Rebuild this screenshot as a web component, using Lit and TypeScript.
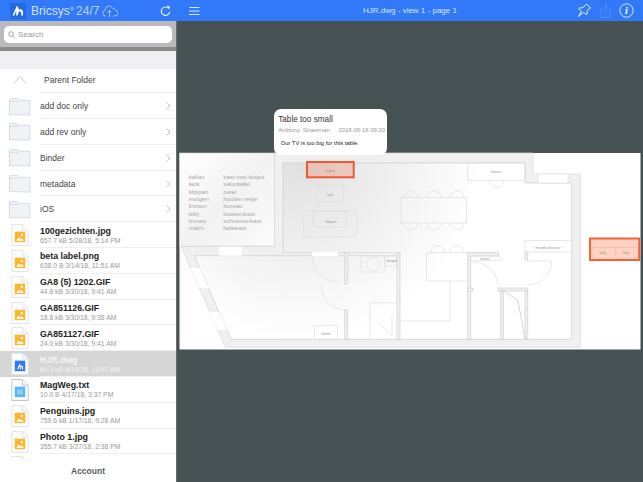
import { LitElement, html, svg, css } from 'lit'
import { customElement, state } from 'lit/decorators.js'

type Entry = { name: string; meta?: string; kind: 'folder' | 'image' | 'dwg' | 'txt'; selected?: boolean }

const ENTRIES: Entry[] = [
  { name: 'add doc only', kind: 'folder' },
  { name: 'add rev only', kind: 'folder' },
  { name: 'Binder', kind: 'folder' },
  { name: 'metadata', kind: 'folder' },
  { name: 'iOS', kind: 'folder' },
  { name: '100gezichten.jpg', meta: '657.7 kB 5/28/18, 5:14 PM', kind: 'image' },
  { name: 'beta label.png', meta: '638.0 B 3/14/18, 11:51 AM', kind: 'image' },
  { name: 'GA8 (5) 1202.GIF', meta: '44.8 kB 3/30/18, 9:41 AM', kind: 'image' },
  { name: 'GA851126.GIF', meta: '18.8 kB 3/30/18, 9:38 AM', kind: 'image' },
  { name: 'GA851127.GIF', meta: '24.0 kB 3/30/18, 9:41 AM', kind: 'image' },
  { name: 'HJR.dwg', meta: '64.3 kB 6/18/18, 11:07 AM', kind: 'dwg', selected: true },
  { name: 'MagWeg.txt', meta: '10.0 B 4/17/18, 3:37 PM', kind: 'txt' },
  { name: 'Penguins.jpg', meta: '759.6 kB 1/17/18, 9:28 AM', kind: 'image' },
  { name: 'Photo 1.jpg', meta: '355.7 kB 3/27/18, 2:38 PM', kind: 'image' },
]

const LEGEND_A = ['kallax', 'lack', 'klippan', 'molgen', 'linmon', 'billy', 'trones', 'malm']
const LEGEND_B = ['kast met kotjes', 'salontafel', 'zetel', 'houten rekje', 'bureau', 'boekenkast', 'schoenenkast', 'ladekast']

const folderIcon = html`<svg class="icon" width="23" height="19" viewBox="0 0 24 20">
  <path d="M1.5 18.5V2.500q0-1 1-1h7q1 0 2 1.500l.5.5h10q1 0 1 1v14.500z" fill="#f1f2f6" stroke="#d3d9e5" />
  <path d="M1.500 4.500h10" stroke="#d3d9e5" fill="none" />
</svg>`

function docIcon(kind: Entry['kind']) {
  const stroke = kind === 'txt' ? '#bcc3d0' : '#dde3ee'
  let inner = svg``
  if (kind === 'image') {
    inner = svg`<rect x="3.500" y="8" width="11" height="11" fill="#fcb731" />
      <path d="M5 17.500l2.500-3.500 2 2 1.500-1 2 2.500z" fill="#fff" />
      <circle cx="11" cy="11.500" r="1.200" fill="#fff" />`
  } else if (kind === 'dwg') {
    inner = svg`<rect x="3.500" y="8" width="11" height="11" fill="#2f78f6" />
      <path d="M6 17l2.600-6 1.200 2.400q2-.6 2.400 1.200V17h-1.300v-2q-.4-.8-1.400-.2L10.200 17H9l-.4-3.200L7.300 17z" fill="#fff" />`
  } else if (kind === 'txt') {
    inner = svg`<rect x="3.500" y="8" width="11" height="11" fill="#5cb8ee" />
      <rect x="6" y="11" width="6" height="5" fill="#8ed0f5" />`
  }
  return html`<svg class="icon" width="18" height="22" viewBox="0 0 18 23">
    <path d="M.5.500h11l6 6v16H.5z" fill="#fff" stroke=${stroke} />
    <path d="M11.500.500v6h6" fill="#f6f8fb" stroke=${stroke} />
    ${inner}
  </svg>`
}

// floor plan, in page coordinates (the viewBox starts at the top left of the page)
function plan() {
  const text = (x: number, y: number, t: string) =>
    svg`<text x=${x} y=${y} text-anchor="middle" class="lbl">${t}</text>`
  const chair = (x: number, y: number, up: boolean) =>
    svg`<path d="M${x - 7} ${y}a7 7 0 0 ${up ? 1 : 0} 14 0" class="thin" />`
  return svg`
    <defs>
      <radialGradient id="shade" gradientUnits="userSpaceOnUse" cx="300" cy="160" r="180">
        <stop offset="0" stop-color="#e0e0e0" />
        <stop offset="1" stop-color="#ffffff" />
      </radialGradient>
      <linearGradient id="legend" x1="0" y1="0" x2="1" y2="1">
        <stop offset="0" stop-color="#ffffff" />
        <stop offset=".5" stop-color="#f2f2f2" />
        <stop offset="1" stop-color="#fbfbfb" />
      </linearGradient>
    </defs>
    <rect x="179.500" y="153" width="461" height="196.500" fill="#fff" />
    <path d="M181 246.500H274V153H533v21h47.300v173.300H225.300zM283 163v89.500h117v3H194.300L231 339.300H571.700V183H525V163z" fill="#f0f0f0" fill-rule="evenodd" stroke="#dadada" stroke-width=".7" />
    <path d="M283 163H525V183H571.700V339.300H231L194.300 255.700H283z" fill="url(#shade)" />
    <path d="M283 163H525V183H571.700V339.300H231L194.300 255.700H400V252.700H283z" fill="none" stroke="#d6d6d6" stroke-width=".8" />
    <path d="M219 246.500h23v9.200h-23z" fill="#fff" />
    <path d="M190.400 268L199.700 268 208.500 288 199.200 288zM209.700 312L219 312 226.900 330 217.700 330z" fill="#fff" />
    <path d="M538 174h30v9h-30z" fill="#fff" stroke="#dcdcdc" stroke-width=".6" />
    <path d="M312 252h26v4.200h-26z" fill="#fff" />

    <g class="thin">
      <path d="M312 256a26 26 0 0 0 26 26" />
      <path d="M321 285a25 25 0 0 0 25 25" />
      <rect x="361" y="256" width="24" height="16" />
      <circle cx="373" cy="264" r="7" />
      <rect x="385" y="256" width="12" height="10" />
      <path d="M370 339V303H397M400 321h50V281h17.500M377 322l15 13M392 316v21" />
      <path d="M426.500 281V252.700H467.500M426.500 281H450" />
      <rect x="401" y="197.700" width="65.700" height="25.300" />
      <rect x="467.700" y="163" width="57.300" height="17.700" />
      <rect x="303.700" y="211" width="53.300" height="26" />
      <rect x="313" y="211" width="33.700" height="16" />
      <rect x="317" y="185" width="26.700" height="16.700" />
      <rect x="314.300" y="325.700" width="23.400" height="13.600" />
      <rect x="525" y="240.700" width="46.700" height="11.300" />
      <rect x="470.700" y="256" width="29.300" height="4.700" />
      <path d="M473 262a25 26 0 0 1 25 26" />
      <path d="M527.700 285a24 24 0 0 0 24-24H527.700" />
    </g>
    ${chair(410.7, 197.7, true)}${chair(434, 197.7, true)}${chair(457, 197.7, true)}
    ${chair(410.7, 223, false)}${chair(434, 223, false)}${chair(457, 223, false)}
    ${chair(437.7, 252.7, true)}${chair(456.7, 252.7, true)}
    ${chair(496.7, 180.7, false)}

    <g class="wall">
      <path d="M344.700 252.700v31h3v-31zM344.700 310v29.300h3V310z" />
      <path d="M397 252.700h3v86.600h-3z" />
      <path d="M467.700 339.300V252.700H498.500V256H470.700V339.300z" />
      <path d="M467.700 288h5v3h-5zM498 288h29.700v3H498z" />
      <path d="M500.700 291h2.700v48.300h-2.700zM525 291h2.700v48.300H525z" />
      <path d="M525 252h2.700v8H525z" />
    </g>
    <path d="M503.500 290.500L518 300.700 525 339" fill="none" stroke="#c4c4c4" stroke-width=".7" />

    <rect x="179.700" y="153" width="94.600" height="93" fill="url(#legend)" stroke="#d2d2d2" stroke-width=".6" />
    ${LEGEND_A.map((t, i) => svg`<text x="188.700" y=${179 + i * 7.33} class="legend">${t}</text>`)}
    ${LEGEND_B.map((t, i) => svg`<text x="223.300" y=${179 + i * 7.33} class="legend">${t}</text>`)}

    ${text(330.3, 172.400, 'kallax')}${text(330.3, 196, 'lack')}${text(331, 223, 'klippan')}
    ${text(326, 335, 'malm')}${text(392, 261.500, 'droger')}${text(496, 172.500, 'linmon')}
    ${text(548, 248.800, 'meuble dressoir')}${text(485, 259.800, 'trones')}

    <rect x="307" y="162" width="46.700" height="15.300" fill="#f0562a" fill-opacity=".22" stroke="#ee5a30" stroke-width="2" />
    <rect x="590" y="238.500" width="49.200" height="21.500" fill="#ff6a3c" fill-opacity=".3" stroke="#f4643a" stroke-width="2" />
    <path d="M592 247.700H638M615.700 247.700V258M592 247.700V258" fill="none" stroke="#e0b0a0" stroke-width=".6" />
    ${text(602.700, 254, 'billy')}${text(626, 254, 'billy')}
  `
}

@customElement('app-root')
class App extends LitElement {
  static styles = css`
    :host {
      display: flex;
      width: 643px;
      height: 482px;
      overflow: hidden;
      font-family: 'Liberation Sans', Arial, sans-serif;
      color: #333;
    }
    .side {
      width: 177px;
      flex: none;
      display: flex;
      flex-direction: column;
      background: #fff;
      box-shadow: inset -1px 0 0 #6b7173;
    }
    .side-head {
      height: 21px;
      flex: none;
      background: #3179f8;
      display: flex;
      align-items: center;
      padding: 0 6px 0 10px;
      color: #d3e2ff;
    }
    .logo {
      width: 16px;
      height: 16px;
      background: #2469dd;
      display: flex;
      align-items: center;
      justify-content: center;
      margin-right: 5px;
      border-radius: 1px;
    }
    .brand {
      font-size: 12px;
      white-space: nowrap;
    }
    .brand sup {
      font-size: 6px;
      line-height: 0;
      vertical-align: 4px;
      margin-right: 2px;
    }
    .brand .thin {
      opacity: 0.85;
    }
    .cloud {
      margin-left: 3px;
    }
    .refresh {
      margin-left: auto;
    }
    .search-band {
      height: 25.500px;
      flex: none;
      background: #b9b9be;
      padding: 5px 4px 4px 4px;
      box-sizing: border-box;
      margin-right: 1px;
    }
    .search {
      height: 16.500px;
      background: #fff;
      border-radius: 5px;
      display: flex;
      align-items: center;
      gap: 3px;
      padding-left: 4px;
      font-size: 8px;
      color: #98989d;
    }
    .dark-band {
      height: 4.500px;
      flex: none;
      background: #8a8a8a;
      margin-right: 1px;
    }
    .light-band {
      height: 16.500px;
      flex: none;
      background: #efeff4;
      margin-right: 1px;
    }
    .list {
      flex: 1;
      overflow: hidden;
      margin-right: 1px;
    }
    .row {
      height: 25.800px;
      box-sizing: border-box;
      display: flex;
      align-items: center;
      position: relative;
    }
    .row::after {
      content: '';
      position: absolute;
      left: 40px;
      right: 0;
      bottom: 0;
      height: 1px;
      background: #efeff0;
    }
    .first::before {
      content: '';
      position: absolute;
      left: 0;
      right: 0;
      top: 0;
      height: 1px;
      background: #efeff0;
    }
    .slot {
      width: 40px;
      flex: none;
      display: flex;
      justify-content: center;
      padding-right: 1px;
      box-sizing: border-box;
    }
    .row.selected {
      background: #d6d6d6;
    }
    .row.selected .name,
    .row.selected .meta {
      color: #f4f4f4;
    }
    .parent-label {
      margin-left: 4px;
      font-size: 8.500px;
      color: #444;
    }
    .folder-name {
      font-size: 8.500px;
      color: #444;
      flex: 1;
    }
    .chev {
      margin-right: 5px;
    }
    .name {
      font-size: 8.800px;
      font-weight: 700;
      color: #222;
      line-height: 10px;
    }
    .meta {
      font-size: 6.800px;
      color: #9a9a9a;
      line-height: 9px;
    }
    .foot {
      height: 23px;
      flex: none;
      display: flex;
      align-items: center;
      justify-content: center;
      font-size: 8.500px;
      font-weight: 700;
      color: #5a5a5a;
      margin-right: 1px;
      background: #fff;
    }
    .main {
      width: 466px;
      flex: none;
      display: flex;
      flex-direction: column;
      position: relative;
      background: #475254;
    }
    .top {
      height: 21px;
      flex: none;
      background: #3179f8;
      display: flex;
      align-items: center;
      padding: 0 9px 0 12px;
      color: #dbe7ff;
      font-size: 8px;
      position: relative;
    }
    .title {
      position: absolute;
      left: 0;
      right: 0;
      text-align: center;
    }
    .actions {
      margin-left: auto;
      display: flex;
      align-items: center;
      gap: 8px;
    }
    .plan {
      display: block;
      flex: 1;
    }
    .plan .thin,
    .plan .thin rect,
    .plan .thin path,
    .plan .thin circle {
      fill: none;
      stroke: #dedede;
      stroke-width: 0.7;
    }
    .plan .wall path {
      fill: #f0f0f0;
      stroke: #d0d0d0;
      stroke-width: 0.7;
    }
    .plan .lbl {
      font-size: 3.600px;
      fill: #999;
      font-family: 'Liberation Sans', Arial, sans-serif;
    }
    .plan .legend {
      font-size: 6.200px;
      fill: #a8a8a8;
      font-family: 'Liberation Sans', Arial, sans-serif;
    }
    .note {
      position: absolute;
      left: 96.700px;
      top: 108.700px;
      width: 113.300px;
      height: 46.300px;
      box-sizing: border-box;
      padding: 5px 2px 5px 4.500px;
      background: #fff;
      border-radius: 7px;
    }
    .note::after {
      content: '';
      position: absolute;
      left: 50px;
      bottom: -6px;
      width: 0;
      height: 0;
      border-left: 6px solid transparent;
      border-right: 6px solid transparent;
      border-top: 6px solid #f0f0f0;
    }
    .note-title {
      font-size: 8.200px;
      line-height: 11px;
      color: #333;
    }
    .note-meta {
      display: flex;
      justify-content: space-between;
      font-size: 5.900px;
      line-height: 8px;
      margin-top: 1px;
      color: #999;
      white-space: nowrap;
    }
    .note-body {
      margin: 5.500px 0 0 2.500px;
      font-size: 5.800px;
      line-height: 8px;
      color: #222;
      white-space: nowrap;
    }
  `

  @state()
  entries = ENTRIES

  renderRow(e: Entry) {
    if (e.kind === 'folder') {
      return html`<div class="row">
        <div class="slot">${folderIcon}</div>
        <div class="folder-name">${e.name}</div>
        <svg class="chev" width="5" height="8" viewBox="0 0 5 8">
          <path d="M.7.700L4 4 .7 7.300" fill="none" stroke="#c2c2c7" />
        </svg>
      </div>`
    }
    return html`<div class="row ${e.selected ? 'selected' : ''}">
      <div class="slot">${docIcon(e.kind)}</div>
      <div>
        <div class="name">${e.name}</div>
        <div class="meta">${e.meta}</div>
      </div>
    </div>`
  }

  render() {
    return html`
      <div class="side">
        <div class="side-head">
          <div class="logo">
            <svg width="12" height="11" viewBox="0 0 12 11">
              <path d="M.5 10.500L5 .5l2 4q3.500-.8 4 2v4H9.200V7.200q-.6-1-2.300-.6L5.700 10.500H4.200L4.200 6 2.300 10.500z" fill="#fff" />
            </svg>
          </div>
          <div class="brand">Bricsys<sup>®</sup><span class="thin">24/7</span></div>
          <svg class="cloud" width="16" height="12" viewBox="0 0 16 12">
            <path d="M4 11H3.500a3 3 0 0 1-.4-5.900 4 4 0 0 1 7.500-2 3 3 0 0 1 2.700 1.900A3 3 0 0 1 12.500 11H11M7.500 12V5.500M5.500 7.500l2-2 2 2" fill="none" stroke="#b9d2ff" stroke-width=".8" />
          </svg>
          <svg class="refresh" width="11" height="12" viewBox="0 0 11 12">
            <path d="M8.600 3.300A4.200 4.200 0 1 0 9.700 6.500" fill="none" stroke="#e4edff" stroke-width="1.100" />
            <path d="M6.700 0.800l3.200 .4-.5 3.400z" fill="#e4edff" />
          </svg>
        </div>
        <div class="search-band">
          <div class="search">
            <svg width="7" height="7" viewBox="0 0 7 7">
              <circle cx="3" cy="3" r="2.300" fill="none" stroke="#8e8e93" stroke-width=".8" />
              <path d="M4.700 4.700L6.700 6.700" stroke="#8e8e93" stroke-width=".8" />
            </svg>
            Search
          </div>
        </div>
        <div class="dark-band"></div>
        <div class="light-band"></div>
        <div class="list">
          <div class="row first">
            <div class="slot">
              <svg width="14" height="8" viewBox="0 0 14 8">
                <path d="M.7 7.500L7 .9l6.300 6.600" fill="none" stroke="#c9d1de" />
              </svg>
            </div>
            <div class="parent-label">Parent Folder</div>
          </div>
          ${this.entries.map((e) => this.renderRow(e))}
          <div class="row"><div class="slot">${docIcon('image')}</div></div>
        </div>
        <div class="foot">Account</div>
      </div>
      <div class="main">
        <div class="top">
          <svg width="11" height="8" viewBox="0 0 11 8">
            <path d="M0 .5h10.500M0 4h10.500M0 7.500h10.500" stroke="#dbe7ff" />
          </svg>
          <div class="title">HJR.dwg - view 1 - page 1</div>
          <div class="actions">
            <svg width="15" height="15" viewBox="0 0 15 15">
              <path d="M9.500 1l4 4-1.300.6-2.200 3 .2 2.400-1 .8-2.700-2.700L1.500 13.500l3-5-2.800-2.700.8-1 2.400.2 3-2.200z" fill="none" stroke="#fff" stroke-width=".9" />
            </svg>
            <svg width="11" height="14" viewBox="0 0 11 14">
              <path d="M3.500 5H1v8.500h9V5H7.500M5.500 9V1M3.500 2.800l2-2 2 2" fill="none" stroke="#5d93fa" stroke-width=".8" />
            </svg>
            <svg width="15" height="15" viewBox="0 0 15 15">
              <circle cx="7.500" cy="7.500" r="6.700" fill="none" stroke="#e6eeff" stroke-width=".9" />
              <text x="7.500" y="11" text-anchor="middle" font-size="10" font-weight="700" font-style="italic" font-family="Liberation Serif, serif" fill="#fff">i</text>
            </svg>
          </div>
        </div>
        <svg class="plan" width="466" height="461" viewBox="177 21 466 461">${plan()}</svg>
        <div class="note">
          <div class="note-title">Table too small</div>
          <div class="note-meta"><span>Anthony, Straetman</span><span>2018-06-18 09:20</span></div>
          <div class="note-body">Our TV is too big for this table.</div>
        </div>
      </div>
    `
  }
}
export default App
